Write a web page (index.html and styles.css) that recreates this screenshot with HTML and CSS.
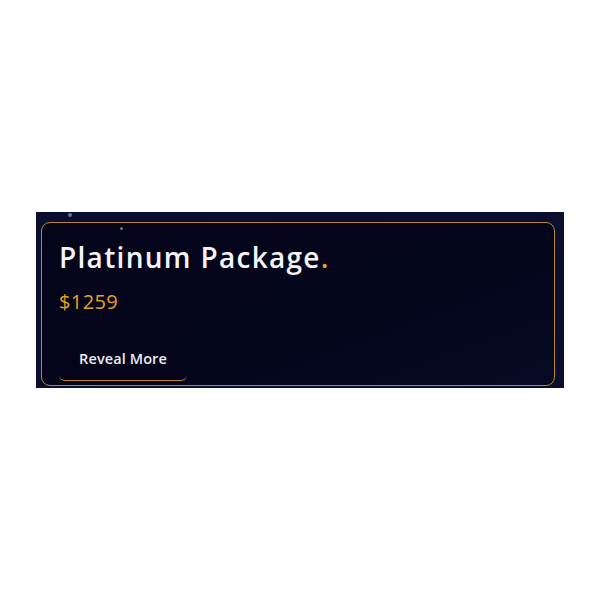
FILE: index.html
```html
<!DOCTYPE html>
<html>
<head>
<meta charset="utf-8">
<link rel="stylesheet" href="styles.css">
</head>
<body>
<section class="stage">
  <span class="dot dot-a"></span>
  <span class="dot dot-b"></span>
  <div class="card">
    <h2 class="title">Platinum Package<span class="accent">.</span></h2>
    <p class="price">$1259</p>
    <button class="btn">Reveal More</button>
  </div>
</section>
</body>
</html>
```
FILE: styles.css
```css
html, body {
  margin: 0;
  padding: 0;
  background: #ffffff;
}
body {
  padding-top: 212px;
  padding-left: 36px;
  font-family: "Open Sans", "DejaVu Sans", sans-serif;
}
.stage {
  position: relative;
  width: 528px;
  height: 176px;
  box-sizing: border-box;
  padding: 10px 9px 2px 5px;
  background: #0b0f2d;
  display: flex;
}
.dot {
  position: absolute;
  width: 4px;
  height: 4px;
  border-radius: 50%;
  background: #6a7090;
}
.dot-a { left: 32px; top: 1px; }
.dot-b { left: 84px; top: 15px; width: 3px; height: 3px; }
.card {
  flex: 1;
  border: 1.5px solid #b9862f;
  border-radius: 9px;
  background: linear-gradient(160deg, #05051a 0%, #04061c 60%, #060a24 100%);
  padding: 14px 0 0 17px;
  display: flex;
  flex-direction: column;
  align-items: flex-start;
}
.title {
  margin: 0;
  font-size: 28px;
  font-weight: 600;
  color: #f4f4f6;
  line-height: 40px;
  letter-spacing: 1.3px;
}
.accent { color: #e9a11c; }
.price {
  margin: 11px 0 0;
  font-size: 20px;
  font-weight: 400;
  color: #e6a21f;
  line-height: 28px;
  letter-spacing: 0.4px;
}
.btn {
  margin-top: 25px;
  width: 128px;
  height: 40px;
  border: none;
  border-bottom: 1px solid #b9862f;
  border-radius: 6px;
  background: #04041a;
  color: #ececf0;
  font-family: inherit;
  font-size: 14.5px;
  font-weight: 600;
  letter-spacing: 0.1px;
  padding: 0 0 5px;
}
```
